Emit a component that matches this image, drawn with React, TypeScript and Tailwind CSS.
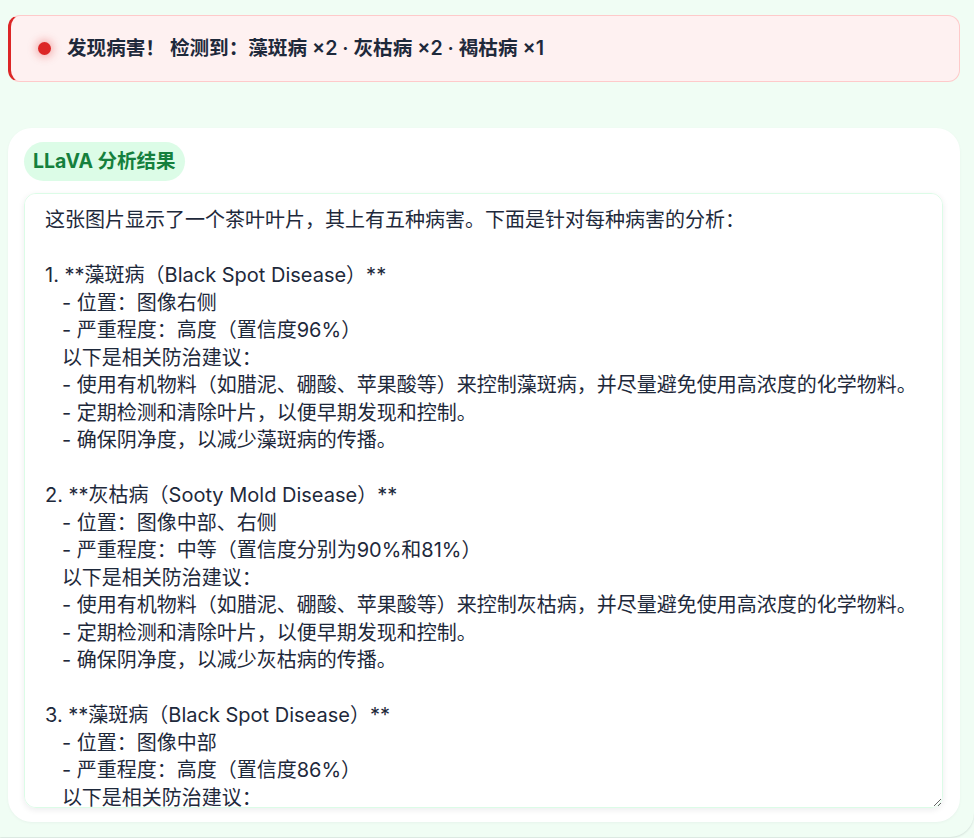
import React from "react";

const analysis = `这张图片显示了一个茶叶叶片，其上有五种病害。下面是针对每种病害的分析：

1. **藻斑病（Black Spot Disease）**
   - 位置：图像右侧
   - 严重程度：高度（置信度96%）
   以下是相关防治建议：
   - 使用有机物料（如腊泥、硼酸、苹果酸等）来控制藻斑病，并尽量避免使用高浓度的化学物料。
   - 定期检测和清除叶片，以便早期发现和控制。
   - 确保阴净度，以减少藻斑病的传播。

2. **灰枯病（Sooty Mold Disease）**
   - 位置：图像中部、右侧
   - 严重程度：中等（置信度分别为90%和81%）
   以下是相关防治建议：
   - 使用有机物料（如腊泥、硼酸、苹果酸等）来控制灰枯病，并尽量避免使用高浓度的化学物料。
   - 定期检测和清除叶片，以便早期发现和控制。
   - 确保阴净度，以减少灰枯病的传播。

3. **藻斑病（Black Spot Disease）**
   - 位置：图像中部
   - 严重程度：高度（置信度86%）
   以下是相关防治建议：
   - 使用有机物料（如腊泥、硼酸、苹果酸等）来控制藻斑病，并尽量避免使用高浓度的化学物料。
   - 定期检测和清除叶片，以便早期发现和控制。
   - 确保阴净度，以减少藻斑病的传播。

4. **褐枯病（Brown Blight Disease）**
   - 位置：图像左侧
   - 严重程度：中等（置信度78%）
   以下是相关防治建议：
   - 及时修剪病叶，加强茶园通风透光。
   - 合理施肥，增强茶树抗病能力。`;

export default function App() {
  return (
    <div className="h-[838px] w-full overflow-hidden bg-[#f0fdf4] font-['Inter','Noto_Sans_CJK_SC',sans-serif] text-[#1e293b]">
      <div className="h-[837px] rounded-br-3xl bg-[#f0fdf4] pl-2 pr-[14px] pt-[15px] shadow-[0_1px_2px_rgba(15,23,42,0.12)]">
        {/* alert */}
        <div className="flex h-[67px] items-center gap-4 rounded-xl border border-[#fecaca] border-l-[3px] border-l-[#dc2626] bg-[#fef1f1] pl-[27px] pr-4">
          <span className="h-[13px] w-[13px] shrink-0 rounded-full bg-[#dc2626] shadow-[0_0_8px_2px_rgba(220,38,38,0.35)]" />
          <p className="text-[19.6px] font-semibold text-[#1e293b]">
            发现病害！ 检测到：藻斑病 ×2 · 灰枯病 ×2 · 褐枯病 ×1
          </p>
        </div>

        {/* result card */}
        <section className="mt-[46px] flex h-[694px] flex-col rounded-3xl bg-white pb-[14px] pl-4 pr-[17px] pt-[14px] shadow-[0_1px_3px_rgba(15,23,42,0.04)]">
          <div className="flex h-[39px] items-center self-start rounded-full bg-[#dcfce7] px-[9px] text-[19.5px] font-bold text-[#15803d]">
            LLaVA 分析结果
          </div>
          <textarea
            readOnly
            defaultValue={analysis}
            className="mt-3 min-h-0 flex-1 resize rounded-xl border border-[#dcfce7] bg-white pl-5 pr-4 pt-[13px] text-xl leading-snug text-[#1e293b] shadow-[0_2px_6px_rgba(15,23,42,0.08)] outline-none [scrollbar-width:none]"
          />
        </section>
      </div>
    </div>
  );
}
